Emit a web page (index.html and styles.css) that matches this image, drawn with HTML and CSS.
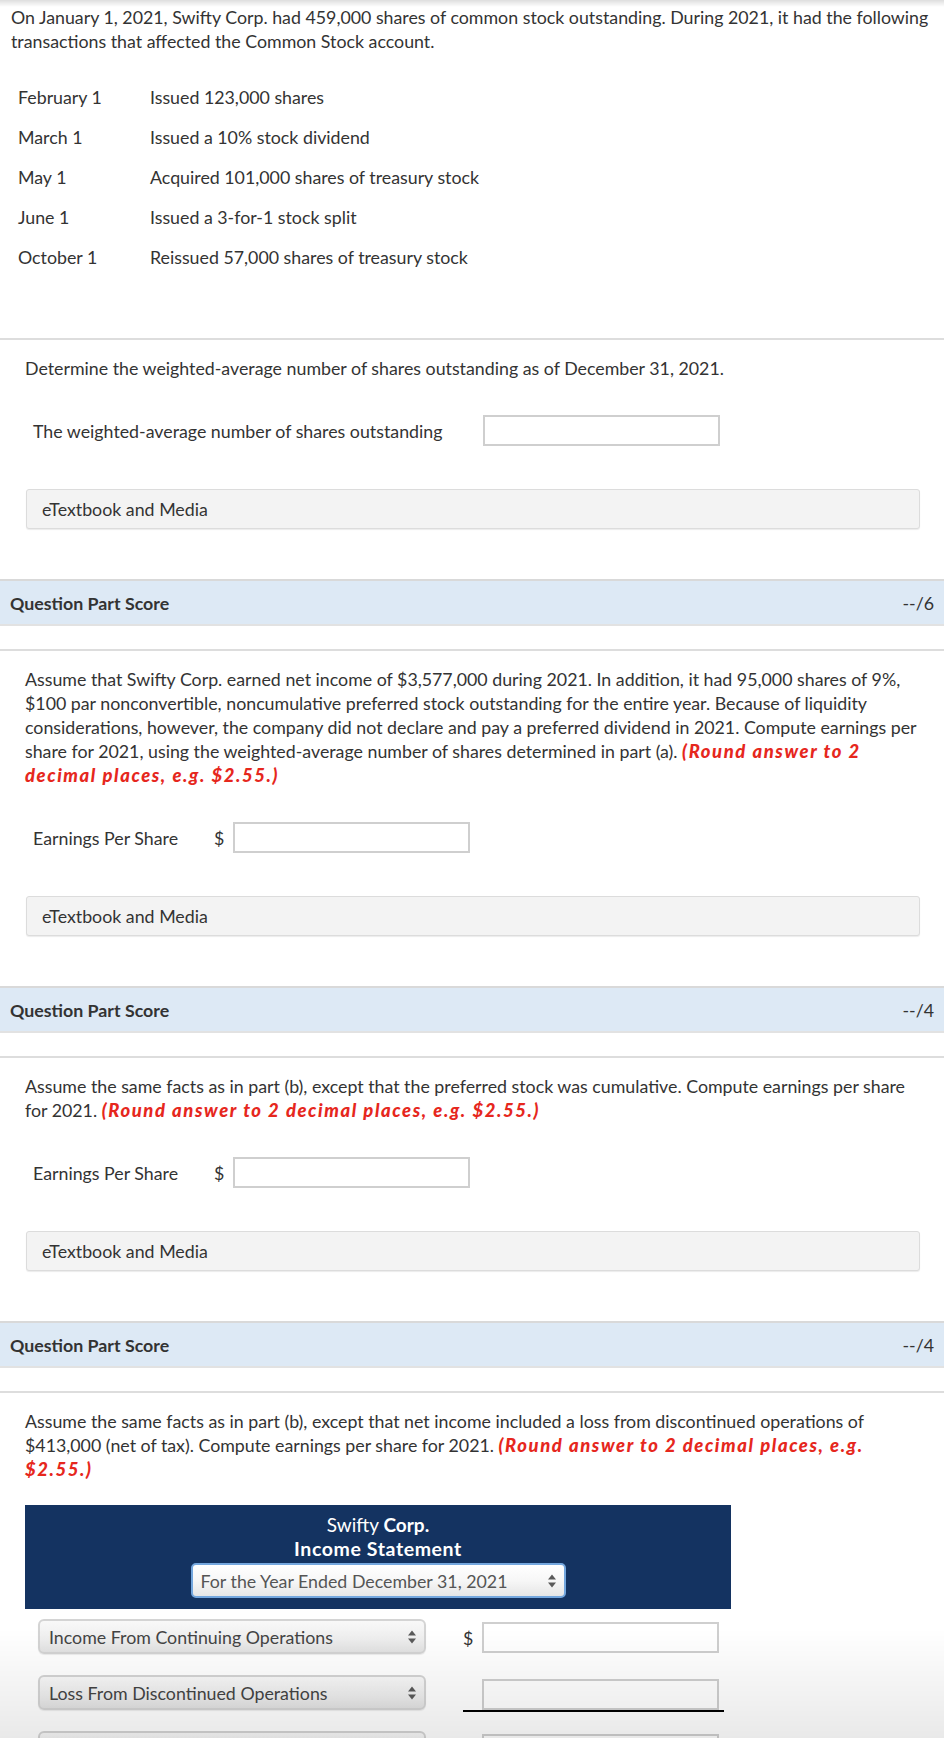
FILE: index.html
```html
<!DOCTYPE html>
<html lang="en">
<head>
<meta charset="utf-8">
<title>Weighted-average shares and EPS</title>
<link rel="stylesheet" href="styles.css">
</head>
<body>
<div class="top-shade"></div>

<div class="intro">
  <p>On January 1, 2021, Swifty Corp. had 459,000 shares of common stock outstanding. During 2021, it had the following transactions that affected the Common Stock account.</p>
  <div class="events">
    <div class="date">February 1</div><div>Issued 123,000 shares</div>
    <div class="date">March 1</div><div>Issued a 10% stock dividend</div>
    <div class="date">May 1</div><div>Acquired 101,000 shares of treasury stock</div>
    <div class="date">June 1</div><div>Issued a 3-for-1 stock split</div>
    <div class="date">October 1</div><div>Reissued 57,000 shares of treasury stock</div>
  </div>
</div>

<section class="part first">
  <div class="part-body">
    <p class="prompt">Determine the weighted-average number of shares outstanding as of December 31, 2021.</p>
    <div class="answer-row">
      <span class="label wide">The weighted-average number of shares outstanding</span>
      <input class="field" type="text" aria-label="Weighted-average shares">
    </div>
    <div class="media">eTextbook and Media</div>
  </div>
  <div class="score"><span class="score-label">Question Part Score</span><span>--/6</span></div>
</section>

<section class="part">
  <div class="part-body">
    <p class="prompt">Assume that Swifty Corp. earned net income of $3,577,000 during 2021. In addition, it had 95,000 shares of 9%, $100 par nonconvertible, noncumulative preferred stock outstanding for the entire year. Because of liquidity considerations, however, the company did not declare and pay a preferred dividend in 2021. Compute earnings per share for 2021, using the weighted-average number of shares determined in part (a). <em class="note">(Round answer to 2 decimal places, e.g. $2.55.)</em></p>
    <div class="answer-row">
      <span class="label eps">Earnings Per Share</span>
      <span class="dollar">$</span>
      <input class="field" type="text" aria-label="Earnings per share">
    </div>
    <div class="media">eTextbook and Media</div>
  </div>
  <div class="score"><span class="score-label">Question Part Score</span><span>--/4</span></div>
</section>

<section class="part">
  <div class="part-body">
    <p class="prompt">Assume the same facts as in part (b), except that the preferred stock was cumulative. Compute earnings per share for 2021. <em class="note">(Round answer to 2 decimal places, e.g. $2.55.)</em></p>
    <div class="answer-row">
      <span class="label eps">Earnings Per Share</span>
      <span class="dollar">$</span>
      <input class="field" type="text" aria-label="Earnings per share cumulative">
    </div>
    <div class="media">eTextbook and Media</div>
  </div>
  <div class="score"><span class="score-label">Question Part Score</span><span>--/4</span></div>
</section>

<section class="part">
  <div class="part-body last">
    <p class="prompt">Assume the same facts as in part (b), except that net income included a loss from discontinued operations of $413,000 (net of tax). Compute earnings per share for 2021. <em class="note">(Round answer to 2 decimal places, e.g. $2.55.)</em></p>
    <div class="statement">
      <div class="statement-head">
        <div class="company">Swifty <strong>Corp.</strong></div>
        <div class="title"><strong>Income Statement</strong></div>
        <div class="select head-select">
          <span>For the Year Ended December 31, 2021</span>
          <svg class="arrows" width="8" height="14" viewBox="0 0 8 14"><path d="M0 5.5L4 0.5L8 5.5Z M0 8.5L4 13.5L8 8.5Z" fill="#5a5a5a"/></svg>
        </div>
      </div>
      <div class="line-row">
        <div class="select row-select">
          <span>Income From Continuing Operations</span>
          <svg class="arrows" width="8" height="14" viewBox="0 0 8 14"><path d="M0 5.5L4 0.5L8 5.5Z M0 8.5L4 13.5L8 8.5Z" fill="#5a5a5a"/></svg>
        </div>
        <div class="amount">
          <span class="dollar">$</span>
          <input class="field" type="text" aria-label="Income from continuing operations">
        </div>
      </div>
      <div class="line-row">
        <div class="select row-select">
          <span>Loss From Discontinued Operations</span>
          <svg class="arrows" width="8" height="14" viewBox="0 0 8 14"><path d="M0 5.5L4 0.5L8 5.5Z M0 8.5L4 13.5L8 8.5Z" fill="#5a5a5a"/></svg>
        </div>
        <div class="amount underlined">
          <span class="dollar blank"></span>
          <input class="field" type="text" aria-label="Loss from discontinued operations">
        </div>
      </div>
      <div class="line-row">
        <div class="select row-select">
          <span>&nbsp;</span>
          <svg class="arrows" width="8" height="14" viewBox="0 0 8 14"><path d="M0 5.5L4 0.5L8 5.5Z M0 8.5L4 13.5L8 8.5Z" fill="#5a5a5a"/></svg>
        </div>
        <div class="amount">
          <span class="dollar blank"></span>
          <input class="field" type="text" aria-label="Net income">
        </div>
      </div>
    </div>
  </div>
</section>

<div class="bottom-shade"></div>
</body>
</html>
```

FILE: styles.css
```css
* {
  box-sizing: border-box;
}

html, body {
  height: 100%;
}

body {
  margin: 0;
  background: #ffffff;
  color: #333333;
  font-family: Lato, "Open Sans", "Liberation Sans", sans-serif;
  font-size: 17.8px;
  line-height: 24px;
  overflow: hidden;
}

p {
  margin: 0;
}

.top-shade {
  position: fixed;
  left: 0;
  right: 0;
  top: 0;
  height: 7px;
  background: linear-gradient(to bottom, rgba(0, 0, 0, 0.13), rgba(0, 0, 0, 0));
  pointer-events: none;
  z-index: 5;
}

.bottom-shade {
  position: fixed;
  left: 0;
  right: 0;
  bottom: 0;
  height: 110px;
  background: linear-gradient(to bottom, rgba(0, 0, 0, 0), rgba(0, 0, 0, 0.085));
  pointer-events: none;
  z-index: 5;
}

.intro {
  padding: 5px 10px 0 11px;
}

.events {
  display: grid;
  grid-template-columns: 132px auto;
  grid-auto-rows: 40px;
  align-items: center;
  margin: 24px 0 0 7px;
}

.part {
  border-top: 2px solid #dddddd;
  margin-top: 23px;
}

.part.first {
  margin-top: 61px;
}

.part-body {
  padding: 16px 24px 50px 25px;
}

.part-body.last {
  padding-bottom: 0;
}

.note {
  color: #e6271d;
  font-weight: 900;
  font-style: italic;
  font-size: 18.4px;
  letter-spacing: 1.6px;
}

.answer-row {
  display: flex;
  align-items: center;
  height: 31px;
  margin-top: 35px;
  padding-left: 8px;
}

.label.wide {
  width: 450px;
}

.label.eps {
  width: 181px;
}

.dollar {
  width: 19px;
  flex: none;
}

.field {
  width: 237px;
  height: 31px;
  border: 2px solid #cfcfcf;
  background: #ffffff;
  font: inherit;
  padding: 0 6px;
  margin: 0;
  outline: none;
}

.media {
  margin: 43px 0 0 1px;
  height: 40px;
  display: flex;
  align-items: center;
  padding-left: 15px;
  background: #f3f3f3;
  border: 1px solid #dcdcdc;
  border-radius: 3px;
  box-shadow: 0 1px 1px rgba(0, 0, 0, 0.08);
  color: #333333;
}

.score {
  display: flex;
  justify-content: space-between;
  align-items: center;
  height: 47px;
  padding: 0 10px;
  background: #dde9f5;
  border-top: 2px solid #d9d9d9;
  border-bottom: 2px solid #e2e2e2;
  color: #333333;
}

.score-label {
  font-weight: 700;
}

.statement {
  width: 706px;
  margin-top: 24px;
}

.statement-head {
  background: #143361;
  color: #ffffff;
  text-align: center;
  padding: 8px 0 11px;
  display: flex;
  flex-direction: column;
  align-items: center;
}

.company {
  font-size: 19px;
}

.title {
  font-size: 19.5px;
  letter-spacing: 0.6px;
}

.select {
  display: flex;
  align-items: center;
  justify-content: space-between;
  height: 35px;
  color: #555555;
  text-align: left;
}

.head-select {
  width: 375px;
  margin-top: 2px;
  padding: 0 8px 0 8px;
  background: linear-gradient(to bottom, #ffffff 0%, #f7f7f7 50%, #e6e6e6 100%);
  border: 2px solid #74a7de;
  border-radius: 5px;
}

.line-row {
  display: flex;
  align-items: center;
  height: 35px;
  margin-top: 10px;
}

.line-row + .line-row {
  margin-top: 21px;
}

.row-select {
  width: 388px;
  margin-left: 13px;
  padding: 0 8px 0 9px;
  background: linear-gradient(to bottom, #f8f8f8 0%, #efefef 55%, #e2e2e2 100%);
  border: 2px solid #d4d4d4;
  border-radius: 6px;
  box-shadow: 0 1px 1px rgba(0, 0, 0, 0.08);
  color: #444444;
}

.amount {
  display: flex;
  align-items: center;
  width: 261px;
  margin-left: 37px;
  height: 35px;
  padding-top: 2px;
}

.amount.underlined {
  border-bottom: 2px solid #000000;
  height: 37px;
  padding-top: 3px;
  margin-top: 2px;
}

.arrows {
  flex: none;
}
```
